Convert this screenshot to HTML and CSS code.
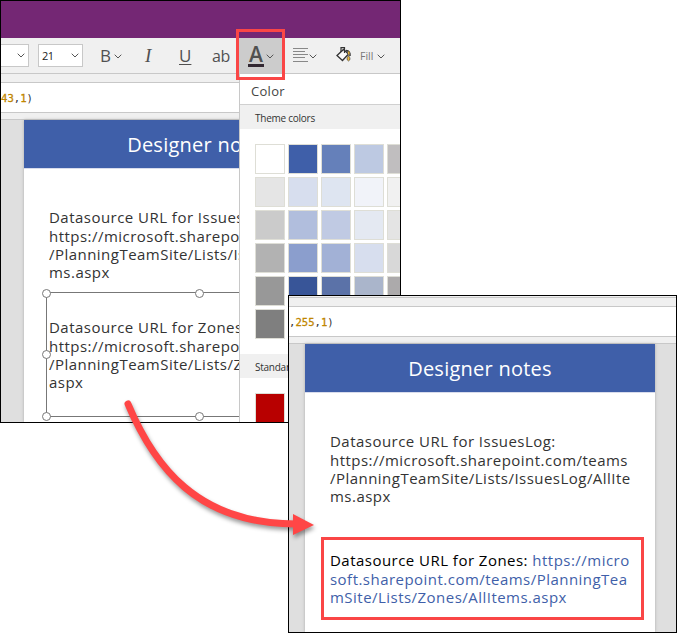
FILE: index.html
```html
<!DOCTYPE html>
<html lang="en">
<head>
<meta charset="utf-8">
<title>Designer notes</title>
<link rel="stylesheet" href="styles.css">
</head>
<body>
<svg width="0" height="0" class="defs"><defs><symbol id="chev" viewBox="0 0 8 5"><path d="M.7.7 4 4 7.3.7" fill="none" stroke="currentColor"/></symbol></defs></svg>
<main class="stage">
  <section class="window editor">
    <div class="titlebar"></div>
    <div class="toolbar">
      <div class="combo font"><svg class="chev"><use href="#chev"/></svg></div>
      <div class="combo size"><span>21</span><svg class="chev"><use href="#chev"/></svg></div>
      <div class="tool bold"><span>B</span><svg class="chev"><use href="#chev"/></svg></div>
      <div class="tool italic">I</div>
      <div class="tool underline">U</div>
      <div class="tool strike">ab</div>
      <div class="tool fontcolor"><span>A</span><svg class="chev"><use href="#chev"/></svg></div>
      <div class="tool align"><svg width="15" height="15" viewBox="0 0 15 15"><path d="M0 .5h15M0 3.500h12M0 6.500h15M0 9.500h12M0 13.500h15" stroke="#888"/></svg><svg class="chev"><use href="#chev"/></svg></div>
      <div class="tool fill"><svg width="16" height="16" viewBox="0 0 16 16"><path d="M1 8.500 7.500 2.500l5 4.500L6.500 13.500z" fill="#fafafa" stroke="#333" stroke-width="1.300"/><path d="M5 5V.700H8.500V6" fill="none" stroke="#333" stroke-width="1.200"/><path d="M10 3.500Q14.500 4 14 9" fill="none" stroke="#333" stroke-width="1.500"/><path d="M12.800 4.500v3" stroke="#e7b43c" stroke-width="1.500"/><path d="M12.500 8.500q3 4 0 5.500-3-1.500 0-5.500" fill="#e7b43c" stroke="#333" stroke-width=".6"/></svg><span>Fill</span><svg class="chev"><use href="#chev"/></svg></div>
    </div>
    <div class="formula"><code><b>43</b>,<b>1</b>)</code></div>
    <div class="canvas">
      <article class="screen">
        <h1>Designer notes</h1>
        <p class="note"><span>Datasource URL for IssuesLog:</span><span>https://microsoft.sharepoint.com/teams</span><span>/PlanningTeamSite/Lists/IssuesLog/AllIte</span><span>ms.aspx</span></p>
        <p class="note second"><span>Datasource URL for Zones:</span><span>https://microsoft.sharepoint.com/teams</span><span>/PlanningTeamSite/Lists/Zones/AllItems.</span><span>aspx</span></p>
        <svg class="selection" width="216" height="134" viewBox="0 0 216 134"><g fill="#fff" stroke="#777"><path d="M5.500 4.500H215M5.500 4.500V128.500H215" fill="none"/><circle cx="5.500" cy="5.500" r="4"/><circle cx="158.500" cy="5.500" r="4"/><circle cx="5.500" cy="66.500" r="4"/><circle cx="5.500" cy="128.500" r="4"/><circle cx="158.500" cy="128.500" r="4"/></g></svg>
      </article>
    </div>
    <aside class="picker">
      <h2>Color</h2>
      <h3>Theme colors</h3>
      <div class="swatches">
        <i class="c-white"></i><i class="c-b0"></i><i class="c-b1"></i><i class="c-b2"></i><i class="c-g0"></i>
        <i class="c-w1"></i><i class="c-b3"></i><i class="c-b4"></i><i class="c-b5"></i><i class="c-g1"></i>
        <i class="c-w2"></i><i class="c-b6"></i><i class="c-b7"></i><i class="c-b8"></i><i class="c-g2"></i>
        <i class="c-w3"></i><i class="c-b9"></i><i class="c-b10"></i><i class="c-b3"></i><i class="c-g3"></i>
        <i class="c-w4"></i><i class="c-b11"></i><i class="c-b12"></i><i class="c-b13"></i><i class="c-g4"></i>
        <i class="c-w5"></i>
      </div>
      <h3 class="standard">Standard</h3>
      <div class="swatches"><i class="c-red"></i></div>
    </aside>
  </section>

  <section class="window result">
    <div class="strip"></div>
    <div class="formula"><code>,<b>255</b>,<b>1</b>)</code></div>
    <div class="canvas">
      <article class="screen">
        <h1>Designer notes</h1>
        <p class="note"><span>Datasource URL for IssuesLog:</span><span>https://microsoft.sharepoint.com/teams</span><span>/PlanningTeamSite/Lists/IssuesLog/AllIte</span><span>ms.aspx</span></p>
        <p class="note link"><span><em>Datasource URL for Zones:</em> https://micro</span><span>soft.sharepoint.com/teams/PlanningTea</span><span>mSite/Lists/Zones/AllItems.aspx</span></p>
      </article>
    </div>
  </section>
  <div class="mark mark-tool"></div>
  <div class="mark mark-link"></div>
  <svg class="arrow" width="677" height="633" viewBox="0 0 677 633"><path d="M128 404C154 466 197 524 296 524" fill="none" stroke="#ff4646" stroke-width="7" stroke-linecap="round"/><path d="M293 514 314 525 293 535z" fill="#ff4646"/></svg>
</main>
</body>
</html>
```

FILE: styles.css
```css
* { box-sizing: border-box; }
body { margin: 0; background: #fff; font-family: "Open Sans", sans-serif; }
h1, h2, h3, p { margin: 0; font-weight: 400; }
.defs { position: absolute; }
.stage { position: relative; width: 677px; height: 633px; overflow: hidden; }
.window { position: absolute; isolation: isolate; border: 1px solid #000; background: #f0f0f0; overflow: hidden; display: flex; flex-direction: column; }
.editor { left: 0; top: 0; width: 401px; height: 423px; }
.result { left: 288px; top: 295px; width: 389px; height: 338px; }
.titlebar { height: 37px; flex: none; background: #742774; }
.toolbar { height: 36px; flex: none; display: flex; align-items: center; border-bottom: 1px solid #c8c8c8; color: #505050; }
.chev { width: 8px; height: 5px; flex: none; color: #555; }
.combo { height: 23px; background: #fff; border: 1px solid #c8c8c8; display: flex; align-items: center; justify-content: space-between; padding: 0 3px; font-size: 11px; letter-spacing: -.5px; color: #222; flex: none; }
.combo.font { width: 28px; border-left: 0; justify-content: flex-end; }
.combo.size { width: 45px; margin-left: 9px; }
.tool { display: flex; align-items: center; font-size: 17px; flex: none; }
.bold { margin-left: 17px; width: 44px; gap: 3px; }
.bold .chev, .fill .chev, .fontcolor .chev, .align .chev { position: relative; top: 1px; }
.italic { width: 35px; padding-left: 1px; font-family: "Liberation Serif", serif; font-style: italic; font-size: 19px; }
.underline { width: 33px; line-height: 22px; text-decoration: underline; text-decoration-thickness: 1px; text-underline-offset: 2px; }
.strike { width: 26px; font-size: 16px; letter-spacing: -.3px; }
.fontcolor { width: 44px; height: 35px; padding-left: 10px; background: #ccc; gap: 2px; }
.fontcolor span { width: 16px; height: 22px; border-bottom: 3px solid #332832; font-size: 21px; font-weight: 600; line-height: 19px; text-align: center; }
.align { margin-left: 11px; gap: 1px; }
.fill { margin-left: 19px; gap: 4px; font-size: 10.5px; color: #777; }
.fill svg:first-child { position: relative; top: -1px; }
.fill span { margin-left: 4px; }
.formula { height: 31px; flex: none; margin-top: 8px; background: #fff; border: solid #c8c8c8; border-width: 1px 0; display: flex; align-items: center; }
.formula code { font: 10.6px "DejaVu Sans Mono", monospace; color: #333; }
.formula b { font-weight: 400; color: #bf8600; -webkit-text-stroke: .3px #bf8600; }
.canvas { flex: 1; margin-top: 6px; border-top: 1px solid #c8c8c8; background: #dfdfdf; display: flex; }
.editor .canvas { padding-left: 23px; }
.result .canvas { padding-left: 16px; }
.screen { position: relative; width: 350px; flex: none; background: #fff; box-shadow: 0 0 3px #aaa; overflow: hidden; }
.screen h1 { height: 49px; background: #3f5fa9; border-bottom: 1px solid #d8dcec; color: #fff; text-align: center; font-size: 20px; line-height: 50px; letter-spacing: .25px; }
.note { padding: 39px 0 0 25px; color: #333; font-size: 15px; letter-spacing: .47px; white-space: nowrap; }
.note span { display: block; height: 18px; line-height: 18px; }
.note span:first-child { margin-bottom: 1px; }
.note.second { padding-top: 37px; }
.note.link { padding-top: 46px; color: #3f5fa9; }
.note em { font-style: normal; color: #000; }
.selection { position: absolute; left: 17px; top: 168px; z-index: 1; }
.second { position: relative; z-index: 2; }
.picker { position: absolute; left: 238px; top: 73px; width: 163px; height: 349px; background: #fff; border-left: 1px solid #c8c8c8; z-index: 3; }
.picker h2 { height: 31px; padding-left: 11px; line-height: 34px; font-size: 13px; letter-spacing: .3px; color: #444; border-bottom: 1px solid #d0d0d0; }
.picker h3 { height: 24px; padding-left: 15px; line-height: 26px; font-size: 10px; letter-spacing: -.25px; color: #333; background: #f0f0f0; }
.swatches { display: grid; grid-template-columns: repeat(5, 30px); grid-auto-rows: 30px; gap: 3px; padding: 15px 0 0 15px; }
.swatches i { border: 1px solid #deded6; }
.picker .standard { margin-top: 15px; }
.c-white { background: #fff; } .c-w1 { background: #e5e5e5; } .c-w2 { background: #cbcbcb; } .c-w3 { background: #b2b2b2; } .c-w4 { background: #989898; } .c-w5 { background: #7f7f7f; }
.c-b0 { background: #3f5fa9; } .c-b1 { background: #6580ba; } .c-b2 { background: #bdc9e2; } .c-b3 { background: #d7deee; } .c-b4 { background: #dee5f1; } .c-b5 { background: #f1f3f9; }
.c-b6 { background: #b1bedd; } .c-b7 { background: #c0cae3; } .c-b8 { background: #e4e9f2; } .c-b9 { background: #8b9ecd; } .c-b10 { background: #a2b1d6; } .c-b11 { background: #385598; } .c-b12 { background: #5b72a8; } .c-b13 { background: #aab5cb; }
.c-g0 { background: #c0bebf; } .c-g1 { background: #f1f1f1; } .c-g2 { background: #e4e4e4; } .c-g3 { background: #d8d8d8; } .c-g4 { background: #acaaab; } .c-red { background: #b80000; }
.strip { height: 2px; flex: none; border-bottom: 1px solid #c8c8c8; }
.mark { position: absolute; border: 3px solid #fa4646; }
.mark-tool { left: 236px; top: 29px; width: 49px; height: 51px; }
.mark-link { left: 321px; top: 537px; width: 323px; height: 83px; }
.arrow { position: absolute; left: 0; top: 0; filter: drop-shadow(1px 3px 2px rgba(0, 0, 0, .4)); }
```
